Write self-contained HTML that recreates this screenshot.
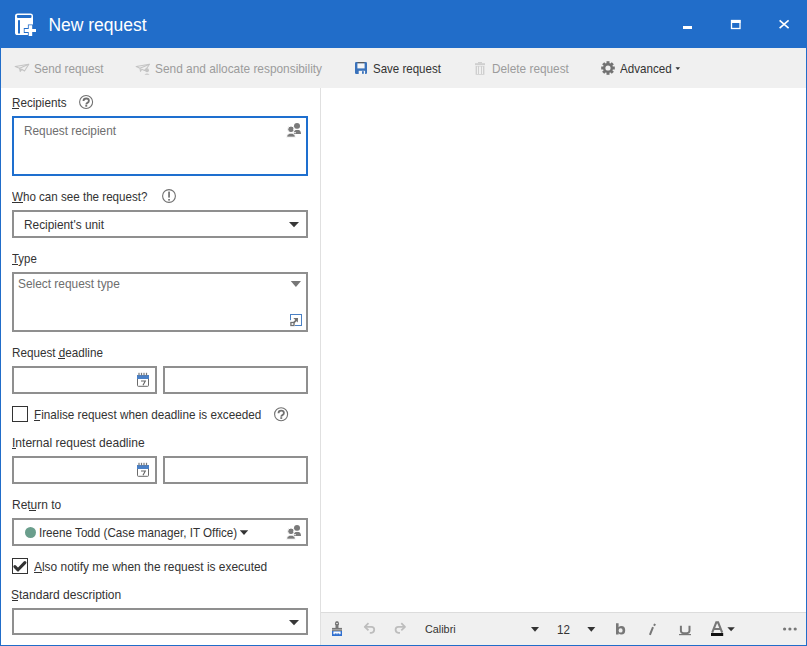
<!DOCTYPE html>
<html><head><meta charset="utf-8">
<style>
*{margin:0;padding:0;box-sizing:border-box}
html,body{width:807px;height:646px;overflow:hidden;background:#fff}
body{position:relative;font-family:"Liberation Sans",sans-serif;color:#333}
.a{position:absolute}
.t{position:absolute;white-space:nowrap;line-height:14px;font-size:12.7px;transform-origin:0 0}
.dk{color:#333}
.ph{color:#6e6e6e}
#title{left:0;top:0;width:807px;height:48px;background:#216dc9}
#win{left:0;top:48px;width:807px;height:598px;border:1px solid #216dc9;border-top:0}
#tb{left:1px;top:48px;width:805px;height:40px;background:#f0f0f0}
#sep{left:320px;top:88px;width:1px;height:557px;background:#e0e0e0}
#btb{left:321px;top:612px;width:485px;height:33px;background:#f0f0f0;border-top:1px solid #dcdcdc}
.box{position:absolute;border:2px solid #8f8f8f;background:#fff}
.dis{color:#9c9c9c}
.lbl{color:#333}
.ul{position:absolute;height:1px;background:#333}
svg{position:absolute;left:0;top:0}
</style></head><body>
<div class="a" id="win"></div>
<div class="a" id="title"></div>
<div class="a" id="tb"></div>
<div class="a" id="sep"></div>
<div class="a" id="btb"></div>

<!-- title -->
<div class="t" style="left:48.4px;top:15px;font-size:17.5px;line-height:20px;color:#fff">New request</div>

<!-- toolbar -->

<!-- form -->
<div class="box" style="left:12px;top:116px;width:296px;height:60px;border-color:#1e6fcf"></div>

<div class="box" style="left:12px;top:210px;width:296px;height:28px"></div>

<div class="box" style="left:12px;top:272px;width:296px;height:60px"></div>

<div class="box" style="left:12px;top:366px;width:145px;height:28px"></div>
<div class="box" style="left:163px;top:366px;width:145px;height:28px"></div>

<div class="a" style="left:12px;top:406px;width:16px;height:16px;border:1px solid #333"></div>

<div class="box" style="left:12px;top:456px;width:145px;height:28px"></div>
<div class="box" style="left:163px;top:456px;width:145px;height:28px"></div>

<div class="box" style="left:12px;top:518px;width:296px;height:28px"></div>
<div class="a" style="left:25px;top:527px;width:11px;height:11px;border-radius:50%;background:#6a9e8c"></div>

<div class="a" style="left:12px;top:558px;width:16px;height:16px;border:1px solid #333"></div>

<div class="box" style="left:12px;top:608px;width:296px;height:27px"></div>

<!-- bottom toolbar -->

<div class="t dis" style="left:33.6px;top:62px;transform:scaleX(0.9213)">Send request</div>
<div class="t dis" style="left:154.5px;top:62px;transform:scaleX(0.936)">Send and allocate responsibility</div>
<div class="t dk" style="left:372.7px;top:62px;transform:scaleX(0.9081)">Save request</div>
<div class="t dis" style="left:491.7px;top:62px;transform:scaleX(0.9317)">Delete request</div>
<div class="t dk" style="left:620.3px;top:62px;transform:scaleX(0.9161)">Advanced</div>
<div class="t lbl" style="left:11.5px;top:96px;transform:scaleX(0.9207)">Recipients</div>
<div class="t ph" style="left:24.4px;top:124px;transform:scaleX(0.9316)">Request recipient</div>
<div class="t lbl" style="left:12px;top:190px;transform:scaleX(0.9142)">Who can see the request?</div>
<div class="t dk" style="left:23.7px;top:218px;transform:scaleX(0.9341)">Recipient's unit</div>
<div class="t lbl" style="left:12.2px;top:252px;transform:scaleX(0.9)">Type</div>
<div class="t ph" style="left:18px;top:277px;transform:scaleX(0.9374)">Select request type</div>
<div class="t lbl" style="left:11.7px;top:346px;transform:scaleX(0.9204)">Request deadline</div>
<div class="t lbl" style="left:33.6px;top:408px;transform:scaleX(0.9233)">Finalise request when deadline is exceeded</div>
<div class="t lbl" style="left:11.7px;top:436px;transform:scaleX(0.9493)">Internal request deadline</div>
<div class="t lbl" style="left:11.8px;top:498px;transform:scaleX(0.9431)">Return to</div>
<div class="t dk" style="left:39px;top:526px;transform:scaleX(0.9182)">Ireene Todd (Case manager, IT Office)</div>
<div class="t lbl" style="left:34.3px;top:560px;transform:scaleX(0.9395)">Also notify me when the request is executed</div>
<div class="t lbl" style="left:11.2px;top:588px;transform:scaleX(0.947)">Standard description</div>
<div class="t dk" style="left:425px;top:622px;font-size:11.5px;transform:scaleX(0.94)">Calibri</div>
<div class="t dk" style="left:557px;top:623px;transform:scaleX(0.9154)">12</div>
<svg width="807" height="646" viewBox="0 0 807 646">
<!-- title icon -->
<g>
<rect x="15" y="13.4" width="18" height="21.6" rx="2.6" fill="#fff"/>
<rect x="16.9" y="15" width="14.6" height="2.9" rx="0.8" fill="#216dc9"/>
<rect x="18" y="20.2" width="2" height="13.3" fill="#216dc9"/>
<path d="M27.9 24.5h5.1v3.6h3.8v4.8h-3.8v3.8h-5.1v-3.8h-4.1v-4.8h4.1z" fill="#216dc9"/>
<path d="M28.7 25.3h3.5v3.6h3.8v3.2h-3.8v3.8h-3.5v-3.8h-4.1v-3.2h4.1z" fill="#fff"/>
</g>
<!-- window controls -->
<rect x="683" y="26" width="9" height="3" fill="#fff"/>
<rect x="731.5" y="20.5" width="8.5" height="8" fill="none" stroke="#fff" stroke-width="1.3"/>
<rect x="731" y="20" width="9.5" height="3" fill="#fff"/>
<path d="M779.6 20.4L788.6 28.2M788.6 20.4L779.6 28.2" stroke="#fff" stroke-width="1.6"/>

<!-- send plane -->
<g fill="none" stroke="#c4c4c4" stroke-width="1.1" stroke-linejoin="round">
<path d="M15.2 66.5L28.8 64.2L24.5 71L21.8 69.2L20.2 71.3L19.6 68.2Z"/>
<path d="M19.6 68.2L28.8 64.2"/>
</g>
<path d="M19.6 68.2L21.8 69.2L20.2 71.3Z" fill="#c4c4c4"/>
<!-- send and allocate -->
<g fill="none" stroke="#c4c4c4" stroke-width="1.1" stroke-linejoin="round">
<path d="M136.2 66.5L149.5 64.2L147 68L144.5 70.5L141.8 69.2L140.5 71.3L140 68.2Z"/>
<path d="M140 68.2L149.5 64.2"/>
</g>
<circle cx="147" cy="70.2" r="2" fill="#c4c4c4"/>
<path d="M144.5 74.8q2.5-2.6 5 0z" fill="#c4c4c4"/>
<!-- save -->
<rect x="355" y="62" width="12" height="12" rx="1.2" fill="#3a72bb"/>
<rect x="357.6" y="62" width="6.8" height="1.4" fill="#5a5a5a"/>
<rect x="357.4" y="63.4" width="7.2" height="5" fill="#f6f6f6"/>
<rect x="358.7" y="70.8" width="6.4" height="3.2" fill="#f6f6f6"/>
<rect x="362" y="71.2" width="1.8" height="2.6" fill="#3a72bb"/>
<!-- trash -->
<g fill="#cfcfcf">
<rect x="478" y="62" width="4" height="1.3"/>
<rect x="475" y="63.2" width="10" height="2"/>
<path d="M475.6 66h8.8v8.8h-8.8z"/>
</g>
<g fill="#f0f0f0">
<rect x="477" y="66.5" width="1" height="7.5"/>
<rect x="479" y="66.5" width="2" height="7.5"/>
<rect x="482" y="66.5" width="1" height="7.5"/>
</g>
<!-- gear -->
<g transform="translate(608,68)" fill="#727272">
<circle r="5"/>
<g id="teeth">
<rect x="-1.5" y="-6.8" width="3" height="3"/>
<rect x="-1.5" y="3.8" width="3" height="3"/>
<rect x="-6.8" y="-1.5" width="3" height="3"/>
<rect x="3.8" y="-1.5" width="3" height="3"/>
</g>
<use href="#teeth" transform="rotate(45)"/>
<circle r="2.6" fill="#f0f0f0"/>
</g>
<path d="M675.5 67.3h4.6l-2.3 2.6z" fill="#333"/>

<!-- help icon recipients -->
<g fill="none" stroke="#707070" stroke-width="1.1">
<circle cx="86.1" cy="102" r="6.5"/>
<path d="M83.5 101q0-2.5 2.7-2.5q2.7 0 2.7 2.3q0 1.3-1.5 2.1q-1.1 0.6-1.1 1.5v0.2" stroke-width="1.8"/>
</g>
<rect x="85.3" y="105" width="1.9" height="1.7" fill="#707070"/>
<!-- exclamation -->
<circle cx="169" cy="196" r="6.4" fill="none" stroke="#707070" stroke-width="1.1"/>
<rect x="168.2" y="191.6" width="1.7" height="6" fill="#707070"/>
<rect x="168.2" y="199" width="1.7" height="1.6" fill="#707070"/>

<!-- people icon recipients -->
<g id="ppl" fill="#7a7a7a">
<circle cx="297" cy="125.9" r="3"/>
<path d="M293.6 134a3.7 4.2 0 0 1 7.4 0z" stroke="#fff" stroke-width="0"/>
<path d="M297.3 129.6" />
<circle cx="291" cy="129.3" r="3.3" stroke="#fff" stroke-width="1"/>
<path d="M286.6 137.2a4.4 4.2 0 0 1 8.8 0z" stroke="#fff" stroke-width="1"/>
</g>
<rect x="293" y="128.8" width="8.5" height="0.9" fill="#fff"/>
<rect x="286" y="132.3" width="10" height="0.9" fill="#fff"/>
<!-- people icon return -->
<use href="#ppl" transform="translate(0,402)"/>
<rect x="293" y="530.8" width="8.5" height="0.9" fill="#fff"/>
<rect x="286" y="534.3" width="10" height="0.9" fill="#fff"/>

<!-- carets -->
<path d="M289 222h10l-5 5.2z" fill="#383838"/>
<path d="M290.8 281h10.2l-5.1 6z" fill="#777"/>
<path d="M239.8 530.3h8.4l-4.2 4.8z" fill="#333"/>
<path d="M289 620h10l-5 5.3z" fill="#383838"/>

<!-- expand icon -->
<rect x="290.5" y="314.5" width="11" height="11" fill="none" stroke="#4a80c4" stroke-width="1"/>
<rect x="289" y="320.2" width="6" height="7" fill="#fff"/>
<rect x="290.9" y="322.5" width="3.1" height="3" fill="none" stroke="#707070" stroke-width="1.3"/>
<path d="M293.6 322.9L296.6 319.9" fill="none" stroke="#707070" stroke-width="1.7"/><path d="M293.3 318.1L298 317.9L297.8 322.6Z" fill="#707070"/>
<!-- calendar icons -->
<g id="cal">
<rect x="137.5" y="376" width="11" height="10.3" rx="0.8" fill="#fff" stroke="#6a6a6a" stroke-width="1"/>
<rect x="137" y="375" width="12" height="4" fill="#4a80c6"/>
<g fill="#7a7a7a"><rect x="138.4" y="372.8" width="1.2" height="2.8"/><rect x="140.9" y="372.8" width="1.2" height="2.8"/><rect x="143.4" y="372.8" width="1.2" height="2.8"/><rect x="145.9" y="372.8" width="1.2" height="2.8"/></g>
<path d="M141 381h4.3l-2.3 4.3" fill="none" stroke="#666" stroke-width="1.1"/>
</g>
<use href="#cal" transform="translate(0,90)"/>

<!-- checkmark -->
<path d="M14.9 566.7L18 569.8L24.9 562.6" fill="none" stroke="#333" stroke-width="3.1" stroke-linecap="round" stroke-linejoin="round"/>

<!-- help icon finalise -->
<g fill="none" stroke="#707070" stroke-width="1.1">
<circle cx="281.1" cy="414.2" r="6.5"/>
<path d="M278.5 413.2q0-2.5 2.7-2.5q2.7 0 2.7 2.3q0 1.3-1.5 2.1q-1.1 0.6-1.1 1.5v0.2" stroke-width="1.8"/>
</g>
<rect x="280.3" y="417.2" width="1.9" height="1.7" fill="#707070"/>

<!-- bottom toolbar icons -->
<!-- brush -->
<path d="M335.5 627.9v-2.6q-0.6-0.6-0.6-1.6q0-2.6 2.1-2.6q2.1 0 2.1 2.6q0 1-0.6 1.6v2.6z" fill="#777"/>
<ellipse cx="337" cy="623.5" rx="1" ry="0.6" fill="#f0f0f0"/>
<rect x="332" y="627.9" width="10" height="3" fill="#777"/>
<rect x="332" y="629" width="10" height="0.8" fill="#aaa"/>
<rect x="332" y="631" width="10" height="5" fill="#2f6fd0"/>
<path d="M333.4 631.4h7.2v2.6l-0.9 0.4l-0.9-1.6l-0.9 1.6l-0.9-1.6l-0.9 1.6l-0.9-1.6l-0.9 1.6l-0.9-0.4z" fill="#fff"/>
<!-- undo redo -->
<g fill="none" stroke="#bdbdbd" stroke-width="1.8" stroke-linejoin="round">
<path d="M368.5 623.2L364.8 626.8L368.5 630.4"/>
<path d="M364.8 626.8h6.6q2.8 0 2.8 2.8q0 3.2-2.8 3.2h-1.6"/>
<path d="M401.3 623.2L405 626.8L401.3 630.4"/>
<path d="M405 626.8h-6.6q-2.8 0-2.8 2.8q0 3.2 2.8 3.2h1.6"/>
</g>
<!-- carets -->
<path d="M531 627h8l-4 4.8z" fill="#333"/>
<path d="M587.3 627h8l-4 4.8z" fill="#333"/>
<!-- b -->
<path d="M616 623.2h2.6v4q1-1.2 2.8-1.2q3.8 0 3.8 4.3q0 4.3-3.8 4.3q-1.8 0-2.8-1.3v1.1h-2.6z M620.6 628.2q-2 0-2 2.2q0 2.2 2 2.2q2 0 2-2.2q0-2.2-2-2.2z" fill="#777" fill-rule="evenodd"/>
<!-- i -->
<path d="M655 623.9l-0.9 1.8M653 627.2l-3.1 7.6" stroke="#777" stroke-width="2"/>
<!-- u -->
<path d="M680.9 625.8v4.9q0 2.5 4.3 2.5q4.3 0 4.3-2.5v-4.9" fill="none" stroke="#777" stroke-width="2"/>
<rect x="679" y="634" width="12" height="1.2" fill="#777"/>
<!-- A -->
<path d="M712.2 632.6L716.3 622.4h1.8L722.2 632.6M713.9 629h6.6" fill="none" stroke="#777" stroke-width="2.1"/>
<rect x="711" y="633" width="12.2" height="3" fill="#111"/>
<path d="M727.4 627.3h7.4l-3.7 4z" fill="#333"/>
<!-- dots -->
<g fill="#777"><circle cx="784.6" cy="629" r="1.6"/><circle cx="789.9" cy="629" r="1.6"/><circle cx="795.2" cy="629" r="1.6"/></g>
</svg>

<!-- underlines -->
<div class="ul" style="left:12px;top:108px;width:7px"></div>
<div class="ul" style="left:12px;top:202px;width:11px"></div>
<div class="ul" style="left:12px;top:264px;width:6px"></div>
<div class="ul" style="left:58px;top:358px;width:7px"></div>
<div class="ul" style="left:34px;top:420px;width:6px"></div>
<div class="ul" style="left:12px;top:448px;width:3.5px"></div>
<div class="ul" style="left:29px;top:510px;width:7px"></div>
<div class="ul" style="left:34px;top:572px;width:8px"></div>
<div class="ul" style="left:12px;top:600px;width:6px"></div>
</body></html>
